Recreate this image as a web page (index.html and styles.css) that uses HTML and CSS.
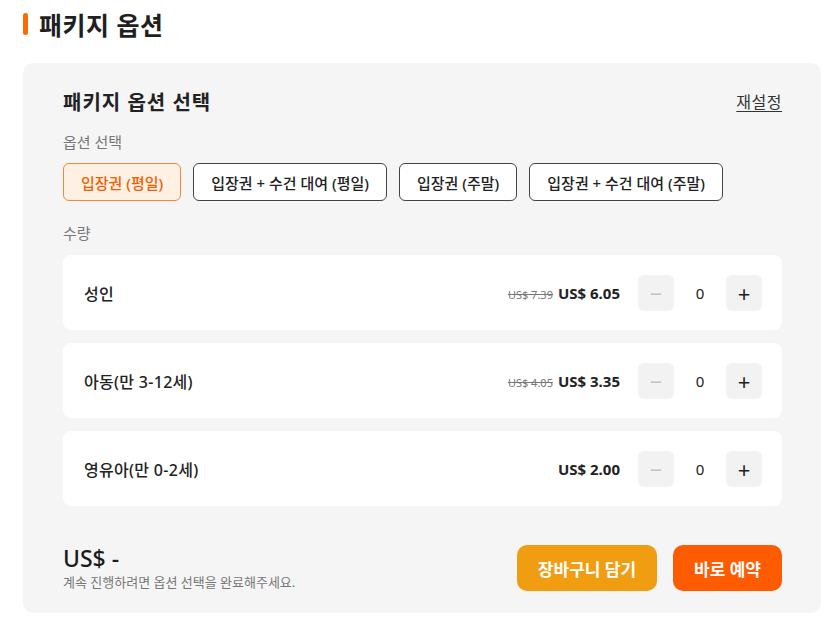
FILE: index.html
```html
<!DOCTYPE html>
<html lang="ko">
<head>
<meta charset="utf-8">
<title>패키지 옵션</title>
<link rel="stylesheet" href="styles.css">
</head>
<body>
<div class="page">
  <h2 class="heading"><span class="heading-bar"></span>패키지 옵션</h2>

  <section class="card">
    <div class="card-head">
      <h3 class="card-title">패키지 옵션 선택</h3>
      <a class="reset" href="#">재설정</a>
    </div>

    <div class="label">옵션 선택</div>
    <div class="chips">
      <button class="chip selected">입장권 (평일)</button>
      <button class="chip">입장권 + 수건 대여 (평일)</button>
      <button class="chip">입장권 (주말)</button>
      <button class="chip">입장권 + 수건 대여 (주말)</button>
    </div>

    <div class="label qty-label">수량</div>
    <div class="rows">
      <div class="row">
        <span class="row-name">성인</span>
        <div class="row-right">
          <span class="price"><s class="old">US$ 7.39</s><b class="now">US$ 6.05</b></span>
          <div class="counter">
            <button class="step disabled">−</button>
            <span class="count">0</span>
            <button class="step">+</button>
          </div>
        </div>
      </div>
      <div class="row">
        <span class="row-name">아동(만 3-12세)</span>
        <div class="row-right">
          <span class="price"><s class="old">US$ 4.05</s><b class="now">US$ 3.35</b></span>
          <div class="counter">
            <button class="step disabled">−</button>
            <span class="count">0</span>
            <button class="step">+</button>
          </div>
        </div>
      </div>
      <div class="row">
        <span class="row-name">영유아(만 0-2세)</span>
        <div class="row-right">
          <span class="price"><b class="now">US$ 2.00</b></span>
          <div class="counter">
            <button class="step disabled">−</button>
            <span class="count">0</span>
            <button class="step">+</button>
          </div>
        </div>
      </div>
    </div>

    <div class="footer">
      <div class="total">
        <div class="total-price">US$ -</div>
        <div class="total-note">계속 진행하려면 옵션 선택을 완료해주세요.</div>
      </div>
      <div class="actions">
        <button class="btn cart">장바구니 담기</button>
        <button class="btn book">바로 예약</button>
      </div>
    </div>
  </section>
</div>
</body>
</html>
```

FILE: styles.css
```css
* {
  box-sizing: border-box;
}

body {
  margin: 0;
  background: #ffffff;
  color: #222222;
  font-family: "Noto Sans", "Noto Sans CJK KR", sans-serif;
}

button {
  font-family: inherit;
  cursor: pointer;
}

.page {
  padding: 8px 10px 0 23px;
}

.heading {
  display: flex;
  align-items: center;
  gap: 11px;
  height: 32px;
  margin: 0;
  font-size: 25px;
  font-weight: 700;
  letter-spacing: 0.5px;
  color: #1f1f1f;
}

.heading-bar {
  width: 5px;
  height: 22px;
  border-radius: 3px;
  background: #ff6a00;
}

.card {
  margin-top: 23px;
  padding: 24px 39px 22px 40px;
  background: #f5f5f5;
  border-radius: 10px;
}

.card-head {
  display: flex;
  align-items: center;
  justify-content: space-between;
  height: 28px;
}

.card-title {
  margin: 0;
  font-size: 20px;
  font-weight: 700;
  letter-spacing: 1px;
  color: #222222;
}

.reset {
  font-size: 16px;
  letter-spacing: 0.5px;
  color: #333333;
  text-decoration: underline;
  text-underline-offset: 3px;
}

.label {
  margin-top: 17px;
  font-size: 15px;
  line-height: 20px;
  color: #777777;
}

.qty-label {
  margin-top: 22px;
}

.chips {
  display: flex;
  gap: 12px;
  margin-top: 11px;
}

.chip {
  height: 38px;
  padding: 0 17px;
  border: 1px solid #444444;
  border-radius: 6px;
  background: #ffffff;
  font-size: 15px;
  font-weight: 500;
  color: #222222;
}

.chip.selected {
  border-color: #f08a3a;
  background: #fff0e4;
  color: #f06000;
}

.rows {
  display: flex;
  flex-direction: column;
  gap: 13px;
  margin-top: 12px;
}

.row {
  display: flex;
  align-items: center;
  justify-content: space-between;
  height: 75px;
  padding: 0 20px 0 21px;
  background: #ffffff;
  border-radius: 8px;
}

.row-name {
  font-size: 16px;
  font-weight: 500;
  letter-spacing: 0.3px;
  color: #222222;
}

.row-right {
  display: flex;
  align-items: center;
  gap: 18px;
}

.price {
  display: flex;
  align-items: baseline;
  gap: 5px;
}

.old {
  font-size: 11px;
  color: #777777;
}

.now {
  font-size: 15px;
  font-weight: 700;
  color: #222222;
}

.counter {
  display: flex;
  align-items: center;
}

.step {
  width: 36px;
  height: 36px;
  border: none;
  border-radius: 6px;
  background: #f2f2f2;
  font-size: 22px;
  line-height: 1;
  color: #222222;
  padding: 0;
}

.step.disabled {
  color: #c4c4c4;
}

.count {
  width: 52px;
  text-align: center;
  font-size: 15px;
  color: #222222;
}

.footer {
  display: flex;
  align-items: flex-end;
  justify-content: space-between;
  margin-top: 38px;
}

.total-price {
  font-size: 23px;
  line-height: 28px;
  font-weight: 500;
  color: #1a1a1a;
}

.total-note {
  margin-top: 2px;
  font-size: 13px;
  line-height: 17px;
  color: #777777;
}

.actions {
  display: flex;
  gap: 16px;
}

.btn {
  height: 46px;
  padding: 0 20px;
  border: none;
  border-radius: 10px;
  font-size: 17px;
  font-weight: 700;
  color: #ffffff;
}

.btn.cart {
  width: 140px;
  background: #f09d12;
}

.btn.book {
  width: 109px;
  background: #ff5b00;
}
```
